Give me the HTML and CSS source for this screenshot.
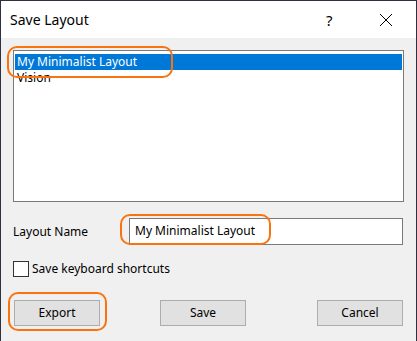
FILE: index.html
```html
<!DOCTYPE html>
<html>
<head>
<meta charset="utf-8">
<link rel="stylesheet" href="styles.css">
</head>
<body>
<div class="window">
  <div class="titlebar">
    <span class="title">Save Layout</span>
    <span class="help">?</span>
    <svg class="close" width="14" height="14" viewBox="0 0 14 14"><path d="M1 1L13 13M13 1L1 13" stroke="#000" stroke-width="1"/></svg>
  </div>
  <div class="content">
    <div class="listbox">
      <div class="item selected">My Minimalist Layout</div>
      <div class="item">Vision</div>
    </div>
    <div class="name-row">
      <span class="label">Layout Name</span>
      <div class="input">My Minimalist Layout</div>
    </div>
    <div class="check-row">
      <span class="checkbox"></span>
      <span class="label">Save keyboard shortcuts</span>
    </div>
    <div class="buttons">
      <div class="btn btn-export">Export</div>
      <div class="btn btn-save">Save</div>
      <div class="btn btn-cancel">Cancel</div>
    </div>
  </div>
  <div class="mark mark-list"></div>
  <div class="mark mark-input"></div>
  <div class="mark mark-export"></div>
</div>
</body>
</html>
```

FILE: styles.css
```css
* { box-sizing: border-box; }
html, body { margin: 0; padding: 0; }
body {
  font-family: "Noto Sans", "Open Sans", sans-serif;
  font-size: 12px;
  color: #000;
  background: #f0f0f0;
}
.window {
  position: relative;
  width: 417px;
  height: 341px;
  background: #f0f0f0;
  border: 1px solid #2f2f3f;
  border-bottom: none;
  display: flex;
  flex-direction: column;
}
.titlebar {
  height: 37px;
  background: #fff;
  display: flex;
  align-items: center;
  padding-left: 9px;
  flex-shrink: 0;
}
.title {
  font-size: 14px;
  flex: 1;
}
.help {
  font-size: 15px;
  width: 12px;
  margin-right: 41px;
}
.close {
  margin-right: 23px;
  display: block;
}
.content {
  padding: 12px 12px 0 12px;
  display: flex;
  flex-direction: column;
}
.listbox {
  height: 152px;
  background: #fff;
  border: 1px solid #7a7a7a;
  padding: 3px 1px 2px;
}
.item {
  height: 16px;
  line-height: 16px;
  padding-left: 2px;
  white-space: nowrap;
}
.item.selected {
  background: #0078d7;
  color: #fff;
}
.name-row {
  display: flex;
  align-items: center;
  margin-top: 16px;
}
.name-row .label {
  width: 116px;
}
.input {
  width: 274px;
  height: 27px;
  background: #fff;
  border: 1px solid #7a7a7a;
  padding-left: 5px;
  line-height: 24px;
}
.check-row {
  display: flex;
  align-items: center;
  margin-top: 15px;
}
.checkbox {
  width: 16px;
  height: 16px;
  border: 1px solid #333;
  background: #fff;
  margin-right: 3px;
}
.buttons {
  display: flex;
  margin-top: 23px;
}
.btn {
  width: 86px;
  height: 26px;
  background: #e1e1e1;
  border: 1px solid #adadad;
  text-align: center;
  line-height: 24px;
}
.btn-export { margin-left: 1px; }
.btn-save { margin-left: 60px; }
.btn-cancel { margin-left: 71px; }
.mark {
  position: absolute;
  border: 2.5px solid #f9730f;
  border-radius: 10px;
}
.mark-list { left: 6px; top: 45px; width: 166px; height: 32px; }
.mark-input { left: 119px; top: 213px; width: 151px; height: 31px; }
.mark-export { left: 7px; top: 291px; width: 99px; height: 39px; }
```
